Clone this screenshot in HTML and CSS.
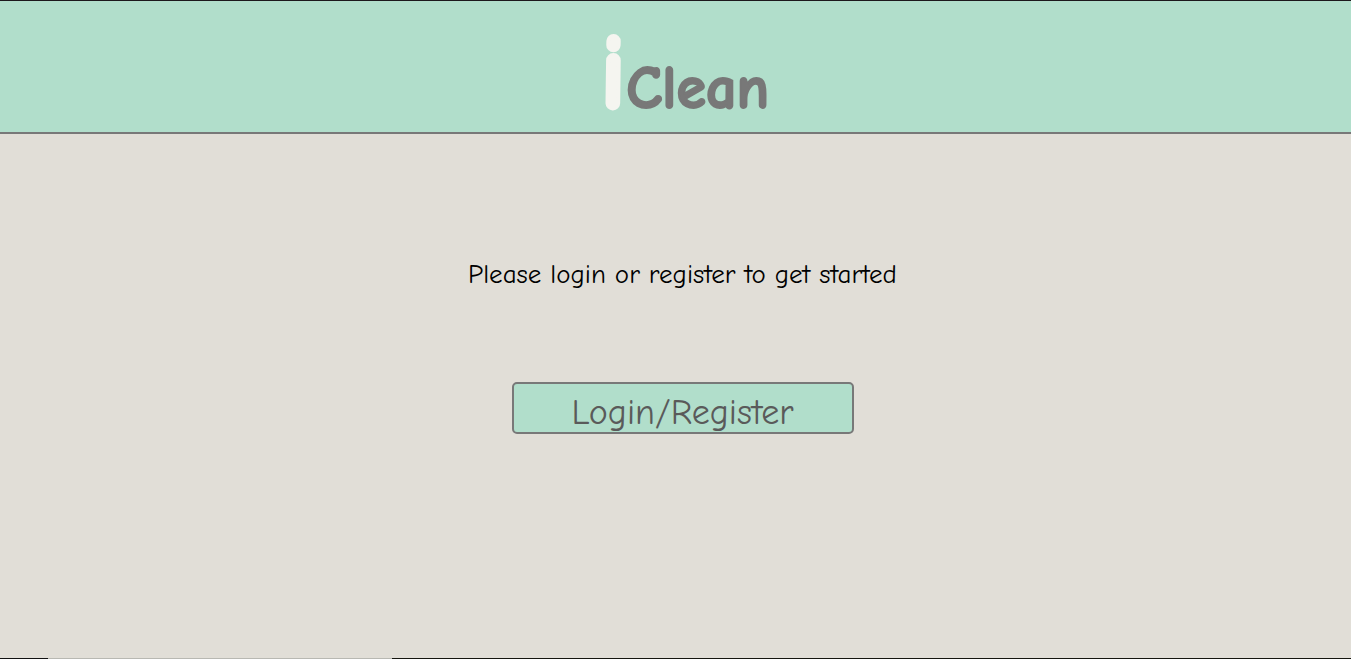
FILE: index.html
```html
<!DOCTYPE html>
<html lang="en">
<head>
<meta charset="utf-8">
<title>iClean</title>
<link rel="stylesheet" href="styles.css">
</head>
<body>
<header class="banner">
  <h1 class="brand"><span class="brand-i">i</span>Clean</h1>
</header>
<main class="welcome">
  <p class="prompt">Please login or register to get started</p>
  <button class="login" type="button">Login/Register</button>
</main>
<footer class="edge"></footer>
</body>
</html>
```

FILE: styles.css
```css
* { box-sizing: border-box; }

body {
  margin: 0;
  min-height: 100vh;
  display: flex;
  flex-direction: column;
  background: #e1ded7;
  border-top: 1px solid #1c181c;
  font-family: "Comic Sans MS", "Comic Neue", "Open Sans", sans-serif;
}

.banner {
  padding: 6px 0 0 18px;
  height: 133px;
  background: #b1decb;
  border-bottom: 2px solid #787878;
  text-align: center;
}

.brand {
  margin: 0;
  color: #787878;
  font-size: 60px;
  line-height: 132px;
  -webkit-text-stroke: 2px #787878;
}

.brand-i {
  color: #f5f5f0;
  font-size: 108px;
  -webkit-text-stroke: 4px #f5f5f0;
}

.welcome {
  flex: 1;
  display: flex;
  flex-direction: column;
  align-items: center;
  padding: 125px 0 0 14px;
}

.prompt {
  margin: 0 0 91px;
  color: #000;
  font-size: 27px;
  line-height: 32px;
}

.login {
  width: 342px;
  height: 52px;
  padding: 10px 0 0;
  border: 2px solid #787878;
  border-radius: 5px;
  background: #b1decb;
  color: #5a5a5a;
  font-family: inherit;
  font-size: 36px;
  line-height: 38px;
}

.edge {
  height: 1px;
  background: linear-gradient(to right, #111 48px, #b8b8b2 48px, #b8b8b2 392px, #15150f 392px);
}
```
